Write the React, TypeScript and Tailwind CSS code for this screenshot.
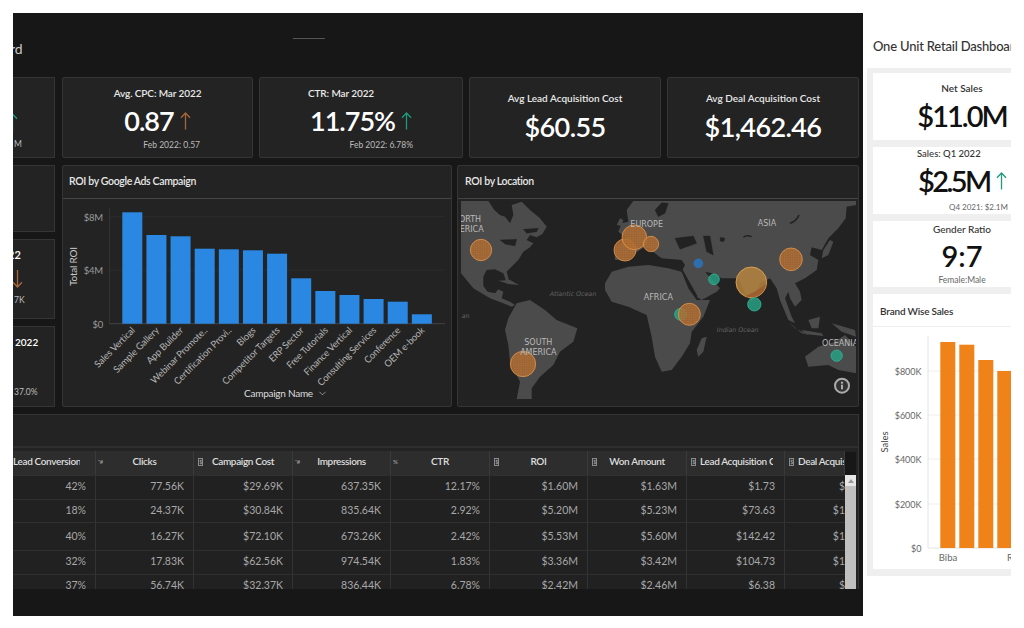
import { ChevronDown } from "lucide-react";

const UpArrow = ({ className }: { className: string }) => (
  <svg width="11" height="18" viewBox="0 0 11 18" fill="none" stroke="currentColor" strokeWidth="1.3" className={className}>
    <path d="M5.5 1V17.5M1 5.8L5.5 1L10 5.8" />
  </svg>
);

const DownArrow = ({ className }: { className: string }) => (
  <svg width="11" height="18" viewBox="0 0 11 18" fill="none" stroke="currentColor" strokeWidth="1.3" className={className}>
    <path d="M5.5 0V17M1 12.2L5.5 17L10 12.2" />
  </svg>
);

const roiBars = [
  { name: "Sales Vertical", top: 212.3 },
  { name: "Sample Gallery", top: 235 },
  { name: "App Builder", top: 236.3 },
  { name: "Webinar Promote..", top: 248.7 },
  { name: "Certification Provi..", top: 249.3 },
  { name: "Blogs", top: 250.3 },
  { name: "Competitor Targets", top: 253.7 },
  { name: "ERP Sector", top: 278.3 },
  { name: "Free Tutorials", top: 291 },
  { name: "Finance Vertical", top: 295 },
  { name: "Consulting Services", top: 299 },
  { name: "Conference", top: 301.7 },
  { name: "OEM e-book", top: 314.3 },
];

const RoiChart = () => (
  <svg viewBox="63 199 388 207" className="w-[388px] h-[207px] block [font-family:Lato,sans-serif]">
    <line x1="109" y1="216.7" x2="445" y2="216.7" stroke="#2c2c2c" />
    <line x1="109" y1="270" x2="445" y2="270" stroke="#2c2c2c" />
    <line x1="109" y1="323.7" x2="445" y2="323.7" stroke="#444" />
    <line x1="109.5" y1="208" x2="109.5" y2="323.7" stroke="#333" />
    {["$8M", "$4M", "$0"].map((t, i) => (
      <text key={t} x="103" y={[220.5, 274, 327.5][i]} textAnchor="end" fontSize="9.5" letterSpacing="-0.2" fill="#9a9a9a">{t}</text>
    ))}
    <text transform="translate(77 266.5) rotate(-90)" textAnchor="middle" fontSize="10" letterSpacing="-0.2" fill="#c8c8c8">Total ROI</text>
    {roiBars.map((b, i) => (
      <g key={b.name}>
        <rect x={122.3 + i * 24.13} y={b.top} width="20" height={323.7 - b.top} fill="#2a88e3" />
        <text
          transform={`translate(${135.5 + i * 24.13} 331) rotate(-45)`}
          textAnchor="end"
          fontSize="9.5"
          letterSpacing="-0.15"
          fill="#b4b4b4"
        >
          {b.name}
        </text>
      </g>
    ))}
  </svg>
);

const bubbles = [
  { x: 78, y: 270, r: 32, c: "o" },
  { x: 204, y: 612, r: 38, c: "o" },
  { x: 510, y: 270, r: 33, c: "o" },
  { x: 538, y: 232, r: 37, c: "o" },
  { x: 588, y: 252, r: 23, c: "o" },
  { x: 1008, y: 298, r: 34, c: "o" },
  { x: 889, y: 367, r: 46, c: "y" },
  { x: 777, y: 358, r: 16, c: "t" },
  { x: 898, y: 433, r: 20, c: "t" },
  { x: 677, y: 463, r: 18, c: "t" },
  { x: 703, y: 463, r: 33, c: "o" },
  { x: 1145, y: 587, r: 17, c: "t" },
  { x: 730, y: 310, r: 13, c: "b" },
];

const bubbleFill: Record<string, string> = { o: "#ad6a30", y: "#b5843f", t: "#27a083", b: "#2a74bd" };
const bubbleStroke: Record<string, string> = { o: "#e0954a", y: "#eaa84f", t: "#2fb597", b: "#2a74bd" };

const MapLabel = ({ x, y, t, size = 24, italic }: { x: number; y: number; t: string; size?: number; italic?: boolean }) => (
  <text x={x} y={y} fontSize={size} fill={italic ? "#636363" : "#b9b9b9"} fontStyle={italic ? "italic" : "normal"} textAnchor="middle">
    {t}
  </text>
);

// coordinates follow the 3x crop of the map, so viewBox is 3 times the px size
const WorldMap = () => (
  <svg viewBox="18 123 1185 594" className="w-[395px] h-[198px] block [font-family:'DejaVu_Sans',sans-serif]">
    <defs>
      <pattern id="dots" width="7" height="7" patternUnits="userSpaceOnUse">
        <circle cx="2" cy="2" r="1.4" fill="#e0a060" opacity="0.45" />
      </pattern>
    </defs>
    <rect x="18" y="123" width="1185" height="594" fill="#222222" />
    <g fill="#4b4b4b">
      <path d="M18 123L100 123L118 150L135 165L150 170L165 190L175 165L170 135L200 125L225 150L255 175L275 200L262 222L245 232L225 225L215 240L235 250L225 262L205 275L190 300L165 325L155 335L165 372L155 368L145 340L120 328L95 330L85 350L85 378L98 395L120 400L130 388L145 395L140 415L165 425L180 435L170 440L145 430L105 415L55 385L18 340Z" />
      <path d="M160 475L185 430L225 420L270 450L305 480L367 505L355 545L315 575L295 615L255 650L230 685L230 717L185 717L195 665L165 605L160 555L150 510Z" />
      <path d="M450 370L470 335L520 320L580 315L640 325L680 335L700 385L725 420L765 420L745 470L710 515L705 550L680 590L650 630L620 635L600 590L590 530L575 465L520 440L470 425L450 390Z" />
      <path d="M535 123L1203 123L1203 135L1175 140L1172 175L1150 205L1120 235L1100 270L1070 262L1065 285L1090 300L1085 330L1050 355L1020 370L1035 395L1040 420L1020 440L1005 415L1000 395L990 415L1010 470L1020 490L1000 480L975 420L965 385L945 355L915 370L890 425L870 400L850 355L800 355L770 340L750 335L795 385L785 395L740 420L725 410L680 335L690 315L680 300L620 295L600 280L570 260L540 280L520 300L480 300L478 260L520 240L490 215L500 190L520 185L515 150Z" />
      <path d="M1050 590L1090 560L1140 545L1170 525L1203 560L1203 640L1150 630L1120 615L1060 620Z" />
      <path d="M740 535L755 530L745 575L730 590L725 570Z" />
      <path d="M485 195L495 175L505 180L500 198Z" />
      <path d="M130 362L165 360L192 375L160 372Z" />
      <path d="M1000 485L1040 520L1060 525L1020 505ZM1040 510L1100 520L1105 528L1050 522ZM1060 480L1095 470L1090 505L1070 505ZM1130 490L1200 510L1203 530L1160 515ZM1105 270L1125 240L1135 245L1120 285L1100 295Z" />
    </g>
    <g fill="#222222" stroke="#222222">
      <path d="M600 150L620 128L640 130L630 160L610 170Z" />
      <path d="M660 235L715 228L725 250L675 268Z" />
      <path d="M745 228L765 228L775 285L755 275Z" />
      <path d="M796 232L810 235L806 245L795 243Z" />
      <path d="M135 240L185 238L180 258L150 252Z" />
      <path d="M205 208L250 205L245 215L215 220Z" />
    </g>
    <g fill="none" stroke="#222222">
      <path d="M680 330L725 410" strokeWidth="6" />
      <path d="M1005 190C1020 185 1028 175 1032 165" strokeWidth="5" />
      <path d="M865 232C872 226 880 226 890 230" strokeWidth="4" />
    </g>
    {bubbles.map((b) => (
      <g key={`${b.x}-${b.y}`}>
        <circle cx={b.x} cy={b.y} r={b.r} fill={bubbleFill[b.c]} fillOpacity="0.85" stroke={bubbleStroke[b.c]} strokeWidth="2.5" />
        {b.c === "o" && <circle cx={b.x} cy={b.y} r={b.r - 2} fill="url(#dots)" />}
      </g>
    ))}
    <path d="M872 409Q905 395 933 372A45 45 0 0 1 872 409Z" fill="#9c5f30" />
    <MapLabel x={45} y={187} t="ORTH" />
    <MapLabel x={50} y={215} t="ERICA" />
    <MapLabel x={575} y={200} t="EUROPE" />
    <MapLabel x={936} y={198} t="ASIA" />
    <MapLabel x={610} y={420} t="AFRICA" />
    <MapLabel x={250} y={556} t="SOUTH" />
    <MapLabel x={250} y={584} t="AMERICA" />
    <MapLabel x={1155} y={558} t="OCEANIA" />
    <MapLabel x={354} y={408} t="Atlantic Ocean" size={19} italic />
    <MapLabel x={848} y={517} t="Indian Ocean" size={19} italic />
    <MapLabel x={32} y={474} t="an" size={19} italic />
    <circle cx="1161" cy="677" r="21" fill="#333" stroke="#ababab" strokeWidth="6" />
    <circle cx="1161" cy="668" r="3.5" fill="#ababab" />
    <rect x="1158" y="674" width="6" height="14" fill="#ababab" />
  </svg>
);

type KpiProps = {
  title: string;
  value: string;
  foot: string;
  arrow: string;
  width: string;
  titleShift?: string;
  footPad: string;
};

const Kpi = ({ title, value, foot, arrow, width, titleShift, footPad }: KpiProps) => (
  <div className={`${width} h-full bg-[#232323] border border-[#353535] rounded-[2px] flex flex-col pt-[8px]`}>
    <div className={`text-center text-[10px] leading-[14px] font-semibold tracking-[-0.1px] text-[#e8e8e8] ${titleShift ?? ""}`}>{title}</div>
    <div className="mt-[5px] flex items-center justify-center gap-[6px] h-[32px]">
      <span className="text-[27px] leading-[32px] font-semibold tracking-[-1px] text-white">{value}</span>
      <UpArrow className={arrow} />
    </div>
    <div className={`mt-[2px] text-right text-[8.5px] leading-[12px] text-[#bdbdbd] ${footPad}`}>{foot}</div>
  </div>
);

const CostCard = ({ title, value }: { title: string; value: string }) => (
  <div className="w-[192px] h-full bg-[#232323] border border-[#353535] rounded-[2px] flex flex-col items-center pt-[13px]">
    <div className="text-[10px] leading-[14px] font-semibold text-[#e8e8e8]">{title}</div>
    <div className="mt-[6px] text-[27px] leading-[32px] font-semibold tracking-[-0.6px] text-white">{value}</div>
  </div>
);

const columns = [
  { w: "w-[83px]", label: "Lead Conversion", icon: "", cls: "pr-[15px] text-right", clip: "" },
  { w: "w-[98px]", label: "Clicks", icon: "hash", cls: "text-center", clip: "" },
  { w: "w-[99px]", label: "Campaign Cost", icon: "box", cls: "text-center", clip: "" },
  { w: "w-[98px]", label: "Impressions", icon: "hash", cls: "text-center", clip: "" },
  { w: "w-[99px]", label: "CTR", icon: "pct", cls: "text-center", clip: "" },
  { w: "w-[98px]", label: "ROI", icon: "box", cls: "text-center", clip: "" },
  { w: "w-[99px]", label: "Won Amount", icon: "box", cls: "text-center", clip: "" },
  { w: "w-[98px]", label: "Lead Acquisition Cost", icon: "box", cls: "text-left pl-[13px]", clip: "w-[73px]" },
  { w: "w-[60px]", label: "Deal Acquisition Cost", icon: "box", cls: "text-left pl-[13px]", clip: "" },
];

const rows = [
  { h: "h-[23.5px]", cells: ["42%", "77.56K", "$29.69K", "637.35K", "12.17%", "$1.60M", "$1.63M", "$1.73", "$"] },
  { h: "h-[23.5px]", cells: ["18%", "24.37K", "$30.84K", "835.64K", "2.92%", "$5.20M", "$5.23M", "$73.63", "$1"] },
  { h: "h-[28px]", cells: ["40%", "16.27K", "$72.10K", "673.26K", "2.42%", "$5.53M", "$5.60M", "$142.42", "$1"] },
  { h: "h-[23.5px]", cells: ["32%", "17.83K", "$62.56K", "974.54K", "1.83%", "$3.36M", "$3.42M", "$104.73", "$1"] },
  { h: "h-[23.5px]", cells: ["37%", "56.74K", "$32.37K", "836.44K", "6.78%", "$2.42M", "$2.46M", "$6.38", "$"] },
];

const ColIcon = ({ kind }: { kind: string }) => {
  if (kind === "box") {
    return (
      <span className="absolute left-[4px] top-[7px] w-[5px] h-[8px] border border-[#8a8a8a] text-[5px] leading-[6px] text-center text-[#aaa]">$</span>
    );
  }
  if (kind === "hash") {
    return <span className="absolute left-[2px] top-[6px] text-[6px] leading-[10px] text-[#999]">⁺#</span>;
  }
  if (kind === "pct") {
    return <span className="absolute left-[2px] top-[6px] text-[6px] leading-[10px] text-[#999]">%</span>;
  }
  return null;
};

const DataTable = () => (
  <div className="relative flex-1 min-h-0 bg-[#232323] border-t border-r border-[#353535] overflow-hidden">
    <div className="h-[33px] border-b-2 border-[#2e2e2e]" />
    <div className="mt-[3px] w-[832px] overflow-hidden">
      <div className="flex h-[24px] w-[832px] bg-[#2d2d2d]">
        {columns.map((c) => (
          <div key={c.label} className={`${c.w} shrink-0 relative overflow-hidden whitespace-nowrap border-r border-[#3a3a3a] text-[10px] leading-[21px] font-semibold tracking-[-0.35px] text-[#dedede] ${c.cls}`}>
            <ColIcon kind={c.icon} />
            <span className={`block overflow-hidden ${c.clip}`}>{c.label}</span>
          </div>
        ))}
      </div>
      {rows.map((r) => (
        <div key={r.cells[1]} className={`flex ${r.h} w-[832px] bg-[#212121] border-t border-[#303030]`}>
          {r.cells.map((v, i) => (
            <div key={i} className={`${columns[i].w} shrink-0 flex items-center justify-end ${i === 8 ? "pr-0" : "pr-[9px] border-r border-[#333]"} text-[10.5px] text-[#a8a8a8]`}>
              {v}
            </div>
          ))}
        </div>
      ))}
    </div>
    <div className="absolute left-[832px] top-[37px] w-[11px] h-[140px] flex flex-col">
      <div className="h-[23px] bg-[#171717]" />
      <div className="h-[11px] bg-[#e6e6e6] flex items-center justify-center">
        <div className="w-0 h-0 border-l-[3px] border-r-[3px] border-b-[4px] border-l-transparent border-r-transparent border-b-[#999]" />
      </div>
      <div className="flex-1 bg-[#c0c0c0]" />
    </div>
  </div>
);

const LeftColumn = () => (
  <div className="w-[42px] shrink-0 h-full flex flex-col gap-[7px] text-[#e8e8e8] overflow-hidden">
    <div className="h-[67px] bg-[#232323] border border-l-0 border-[#353535]" />
    <div className="h-[81px] bg-[#232323] border border-l-0 border-[#353535] flex flex-col pt-[8px]">
      <div className="ml-[-5px] text-[11px] leading-[14px] font-semibold text-white">22</div>
      <DownArrow className="mt-[8px] ml-[-1px] text-[#a8673a]" />
      <div className="mt-[6px] pl-[1px] text-[8.5px] leading-[12px] text-[#bdbdbd]">7K</div>
    </div>
    <div className="h-[81px] bg-[#232323] border border-l-0 border-[#353535] flex flex-col pt-[8px]">
      <div className="pl-[2px] text-[10px] leading-[14px] font-semibold text-white">2022</div>
      <div className="mt-[37px] pl-[1px] text-[8.5px] leading-[12px] text-[#bdbdbd]">37.0%</div>
    </div>
  </div>
);

const BrandChart = () => (
  <svg viewBox="873 328 138 241" className="w-[138px] h-[241px] block [font-family:Lato,sans-serif]">
    {[372, 416, 460, 505].map((y) => (
      <line key={y} x1="928" y1={y} x2="1011" y2={y} stroke="#eeeeee" />
    ))}
    <line x1="928" y1="337" x2="928" y2="549" stroke="#e4e4e4" />
    <line x1="928" y1="549" x2="1011" y2="549" stroke="#e4e4e4" />
    {[
      ["$800K", 375.5],
      ["$600K", 419.5],
      ["$400K", 463.5],
      ["$200K", 508.5],
      ["$0", 552.5],
    ].map(([t, y]) => (
      <text key={t} x="921.5" y={y} textAnchor="end" fontSize="9" fill="#666">{t}</text>
    ))}
    <text transform="translate(888 443) rotate(-90)" textAnchor="middle" fontSize="9.5" fill="#444">Sales</text>
    {[343, 345.7, 361, 372].map((top, i) => (
      <rect key={top} x={940.3 + i * 19} y={top} width="15" height={549 - top} fill="#ef8319" />
    ))}
    <text x="948" y="561.5" textAnchor="middle" fontSize="9.5" fill="#666">Biba</text>
    <text x="1007" y="561.5" fontSize="9.5" fill="#666">R</text>
  </svg>
);

export default function App() {
  return (
    <div className="w-[1024px] h-[628px] overflow-hidden bg-white pt-[13px] pl-[13px] flex [font-family:Lato,sans-serif]">
      <div className="w-[850px] h-[603px] shrink-0 bg-[#171717] flex flex-col pr-[4px] pb-[27px] overflow-hidden">
        <div className="h-[64px] shrink-0 relative">
          <div className="absolute left-[-3px] top-[27px] text-[14px] leading-[18px] text-[#c8c8c8]">rd</div>
          <div className="absolute left-[280px] top-[25px] w-[32px] h-px bg-[#555]" />
        </div>
        <div className="h-[81px] shrink-0 flex">
          <div className="w-[42px] shrink-0 h-full bg-[#232323] border border-l-0 border-[#353535] overflow-hidden flex flex-col pt-[35px]">
            <UpArrow className="ml-[-6px] text-[#1f9a7c]" />
            <div className="mt-[7px] pl-[1px] text-[8.5px] leading-[12px] text-[#bdbdbd]">M</div>
          </div>
          <div className="ml-[7px] flex gap-[6px] h-full">
            <Kpi title="Avg. CPC: Mar 2022" value="0.87" foot="Feb 2022: 0.57" arrow="text-[#a8673a]" width="w-[191px]" footPad="pr-[52px]" />
            <Kpi title="CTR: Mar 2022" value="11.75%" foot="Feb 2022: 6.78%" arrow="text-[#1f9a7c]" width="w-[204px]" titleShift="pr-[40px]" footPad="pr-[49px]" />
            <CostCard title="Avg Lead Acquisition Cost" value="$60.55" />
            <CostCard title="Avg Deal Acquisition Cost" value="$1,462.46" />
          </div>
        </div>
        <div className="h-[242px] shrink-0 mt-[7px] flex">
          <LeftColumn />
          <div className="ml-[7px] w-[390px] bg-[#232323] border border-[#353535] rounded-[2px] flex flex-col">
            <div className="h-[33px] shrink-0 border-b border-[#444] pl-[6px] text-[10.5px] leading-[31px] font-semibold tracking-[-0.35px] text-[#e8e8e8]">ROI by Google Ads Campaign</div>
            <div className="relative flex-1 min-h-0">
              <RoiChart />
              <div className="absolute left-[181px] top-[187px] flex items-center gap-[4px] text-[10px] leading-[14px] tracking-[-0.25px] text-[#dcdcdc]">
                Campaign Name
                <ChevronDown size={11} strokeWidth={1.25} />
              </div>
            </div>
          </div>
          <div className="ml-[5px] w-[402px] bg-[#232323] border border-[#353535] rounded-[2px] flex flex-col">
            <div className="h-[33px] shrink-0 border-b border-[#444] pl-[7px] text-[10.5px] leading-[31px] font-semibold tracking-[-0.35px] text-[#e8e8e8]">ROI by Location</div>
            <div className="pl-[3px] pt-[2px]">
              <WorldMap />
            </div>
          </div>
        </div>
        <div className="h-[175px] shrink-0 mt-[7px] flex flex-col">
          <DataTable />
        </div>
      </div>
      <div className="ml-[4px] w-[144px] shrink-0 flex flex-col overflow-hidden">
        <div className="h-[55px] shrink-0 pl-[6px] pt-[24px] whitespace-nowrap text-[13px] leading-[18px] font-medium tracking-[-0.2px] text-[#333]">One Unit Retail Dashboard</div>
        <div className="h-[508px] shrink-0 bg-[#efefef] pl-[6px] pt-[5px] flex flex-col gap-[7px]">
          <div className="w-[178px] h-[67px] shrink-0 bg-white flex flex-col items-center pt-[8px]">
            <div className="text-[10px] leading-[14px] font-semibold text-[#333]">Net Sales</div>
            <div className="mt-[3px] text-[29px] leading-[36px] font-semibold tracking-[-2px] text-[#111]">$11.0M</div>
          </div>
          <div className="w-[178px] h-[67px] shrink-0 bg-white flex flex-col">
            <div className="pl-[44px] text-[9.5px] leading-[14px] font-medium text-[#333]">Sales: Q1 2022</div>
            <div className="mt-[3px] pl-[45px] flex items-center gap-[6px] h-[34px]">
              <span className="text-[29px] leading-[34px] font-semibold tracking-[-2.6px] text-[#111]">$2.5M</span>
              <UpArrow className="text-[#1f9a7c]" />
            </div>
            <div className="mt-[3px] pl-[76px] text-[8px] leading-[12px] text-[#666]">Q4 2021: $2.1M</div>
          </div>
          <div className="w-[178px] h-[66px] shrink-0 bg-white flex flex-col items-center pt-[1px]">
            <div className="text-[10px] leading-[14px] font-medium text-[#333]">Gender Ratio</div>
            <div className="mt-[4px] text-[29px] leading-[32px] font-semibold text-[#111]">9:7</div>
            <div className="mt-[2px] text-[8.5px] leading-[12px] text-[#666]">Female:Male</div>
          </div>
          <div className="w-[178px] h-[275px] shrink-0 bg-white flex flex-col">
            <div className="h-[33px] shrink-0 border-b border-[#eee] pl-[7px] text-[10px] leading-[34px] font-semibold tracking-[-0.2px] text-[#333]">Brand Wise Sales</div>
            <BrandChart />
          </div>
        </div>
      </div>
    </div>
  );
}
